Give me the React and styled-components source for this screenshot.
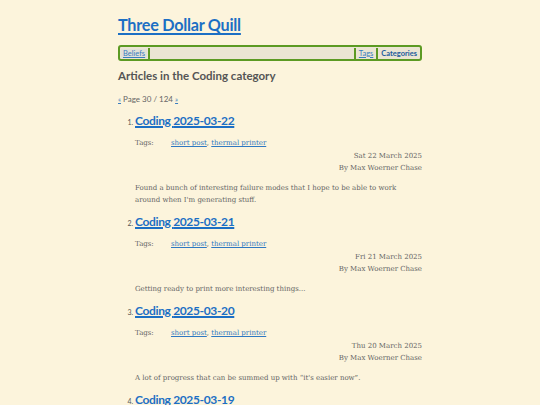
import React from "react";
import styled, { createGlobalStyle } from "styled-components";

const Global = createGlobalStyle`
  html, body { margin: 0; padding: 0; background: #fcf4dc; }
  body { font-family: "DejaVu Serif", serif; color: #646464; }
  a { color: #2f78c2; }
`;

const Page = styled.div`
  width: 304px;
  margin: 0 auto;
  padding-top: 14px;
`;

const Title = styled.h1`
  margin: 0;
  font-family: "Lato", sans-serif;
  font-weight: 700;
  font-size: 16.2px;
  letter-spacing: -0.25px;
  line-height: 22px;
  a { color: #1c6fc4; text-decoration-thickness: 2px; text-underline-offset: 2px; }
`;

const Nav = styled.nav`
  margin-top: 9px;
  height: 12px;
  border: 2px solid #5c9a23;
  border-radius: 3px;
  background: #ebe5d3;
  display: flex;
  align-items: center;
  padding: 0 1px;
  font-family: "Lato", sans-serif;
  font-size: 7.5px;
`;

const NavLink = styled.a`
  padding: 0 2px;
  color: ${(p) => (p.$active ? "#1d5c9b" : "#3a7dbf")};
  font-weight: ${(p) => (p.$active ? 700 : 400)};
  text-decoration: ${(p) => (p.$active ? "none" : "underline")};
  background: ${(p) => (p.$light ? "#e1e1d8" : "transparent")};
`;

const Sep = styled.span`
  width: 2px;
  height: 11px;
  background: #5c9a23;
  margin: 0 1px;
`;

const Spacer = styled.span`
  flex: 1;
`;

const Heading = styled.h2`
  margin: 7px 0 0;
  font-family: "Lato", sans-serif;
  font-size: 11.5px;
  line-height: 16px;
  font-weight: 700;
  color: #555555;
`;

const Pager = styled.div`
  margin-top: 9px;
  font-family: "Lato", sans-serif;
  font-size: 8px;
  line-height: 12px;
  color: #666;
  a { font-size: 7px; color: #3a7dbf; }
`;

const List = styled.ol`
  margin: 8px 0 0;
  padding-left: 17px;
`;

const Item = styled.li`
  margin-bottom: 8px;
  font-size: 7px;
  &::marker { font-family: "Lato", sans-serif; font-size: 7px; color: #555; }
`;

const ItemTitle = styled.h3`
  margin: 0;
  font-family: "Lato", sans-serif;
  font-size: 12px;
  letter-spacing: -0.35px;
  line-height: 16px;
  font-weight: 700;
  a { color: #1c6fc4; text-decoration-thickness: 1.5px; text-underline-offset: 1px; }
`;

const TagsRow = styled.div`
  display: flex;
  margin-top: 8px;
  font-size: 7px;
  line-height: 12px;
`;

const TagLabel = styled.span`
  width: 36px;
`;

const Meta = styled.div`
  margin-top: 1px;
  text-align: right;
  font-size: 7px;
  line-height: 12px;
`;

const Summary = styled.p`
  margin: 8px 0 0;
  font-size: 7px;
  line-height: 12px;
`;

const items = [
  { n: "2025-03-22", date: "Sat 22 March 2025", sum: "Found a bunch of interesting failure modes that I hope to be able to work around when I'm generating stuff." },
  { n: "2025-03-21", date: "Fri 21 March 2025", sum: "Getting ready to print more interesting things..." },
  { n: "2025-03-20", date: "Thu 20 March 2025", sum: "A lot of progress that can be summed up with \u201cit's easier now\u201d." },
  { n: "2025-03-19", date: "Wed 19 March 2025", sum: "More work on the printer." },
];

export default function App() {
  return (
    <>
      <Global />
      <Page>
        <Title><a href="#">Three Dollar Quill</a></Title>
        <Nav>
          <NavLink href="#" $light>Beliefs</NavLink>
          <Sep />
          <Spacer />
          <Sep />
          <NavLink href="#">Tags</NavLink>
          <Sep />
          <NavLink href="#" $active>Categories</NavLink>
        </Nav>
        <Heading>Articles in the Coding category</Heading>
        <Pager><a href="#">«</a> Page 30 / 124 <a href="#">»</a></Pager>
        <List>
          {items.map((it) => (
            <Item key={it.n}>
              <ItemTitle><a href="#">Coding {it.n}</a></ItemTitle>
              <TagsRow>
                <TagLabel>Tags:</TagLabel>
                <span><a href="#">short post</a>, <a href="#">thermal printer</a></span>
              </TagsRow>
              <Meta>
                <div>{it.date}</div>
                <div>By Max Woerner Chase</div>
              </Meta>
              <Summary>{it.sum}</Summary>
            </Item>
          ))}
        </List>
      </Page>
    </>
  );
}
